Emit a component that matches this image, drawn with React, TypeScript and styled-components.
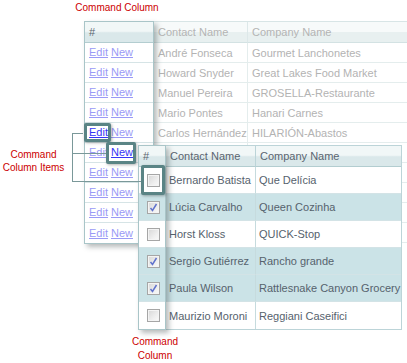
import styled, { createGlobalStyle } from 'styled-components';

const GlobalStyle = createGlobalStyle`
  html, body {
    margin: 0;
    padding: 0;
    background: #fff;
  }
  body {
    font-family: "Liberation Sans", Arial, sans-serif;
  }
`;

const Canvas = styled.div`
  position: relative;
  width: 407px;
  height: 363px;
  overflow: hidden;
  background: #fff;
  font-family: "Liberation Sans", Arial, sans-serif;
  font-size: 11px;
`;

const Note = styled.div<{ $x: number; $y: number; $w: number; $lh: number }>`
  position: absolute;
  left: ${p => p.$x}px;
  top: ${p => p.$y}px;
  width: ${p => p.$w}px;
  text-align: center;
  color: #cc0000;
  font-size: 10px;
  line-height: ${p => p.$lh}px;
  z-index: 5;
`;

/* top grid: faded, only the command column stands out */
const TopGrid = styled.div`
  position: absolute;
  left: 84px;
  top: 21px;
  display: flex;
  align-items: flex-start;
  z-index: 1;
`;

const RaisedColumn = styled.div<{ $width: number }>`
  position: relative;
  z-index: 1;
  width: ${p => p.$width}px;
  box-sizing: border-box;
  border: 1px solid #a9c5c8;
  background: #fff;
  box-shadow: 3px 3px 5px rgba(50, 60, 60, 0.35);
`;

const HeadCell = styled.div<{ $faded?: boolean; $sep?: boolean }>`
  height: 21px;
  box-sizing: border-box;
  display: flex;
  align-items: center;
  padding: 0 4px;
  border-bottom: 1px solid ${p => (p.$faded ? '#d3e2e3' : '#b3cdd0')};
  border-right: ${p => (p.$sep ? `1px solid ${p.$faded ? '#dde8e9' : '#bcd4d8'}` : 'none')};
  background: ${p =>
    p.$faded
      ? 'linear-gradient(#f7fafa 0, #f7fafa 48%, #e8f0f0 52%, #e8f0f0 100%)'
      : 'linear-gradient(#f1f7f7 0, #f1f7f7 46%, #dae8ea 54%, #dae8ea 100%)'};
  color: ${p => (p.$faded ? '#b4b4b4' : '#5a6570')};
  white-space: nowrap;
`;

const CmdRow = styled.div`
  height: 20px;
  box-sizing: border-box;
  border-bottom: 1px solid #d6e4e6;
  display: flex;
  align-items: center;
  gap: 3px;
  padding: 0 4px;

  &:last-child {
    border-bottom: none;
  }
`;

const CmdLink = styled.span<{ $strong?: boolean }>`
  color: ${p => (p.$strong ? '#3434f5' : '#9a9af6')};
  text-decoration: underline;
  line-height: 13px;
`;

/* highlight frame drawn around an item that the notes point at */
const Marked = styled.span<{ $t: number; $r: number; $b: number; $l: number }>`
  position: relative;
  z-index: 4;
  display: inline-flex;

  &::before {
    content: '';
    position: absolute;
    top: -${p => p.$t}px;
    right: -${p => p.$r}px;
    bottom: -${p => p.$b}px;
    left: -${p => p.$l}px;
    border: 3px solid #5a8485;
    border-radius: 2px;
    background: #fff;
    box-shadow: 1px 1px 3px rgba(0, 0, 0, 0.3);
    z-index: -1;
  }
`;

const FadedTable = styled.div`
  display: grid;
  grid-template-columns: 94px 180px;
  border-top: 1px solid #d8e5e6;
`;

const FadedCell = styled.div<{ $sep?: boolean }>`
  height: 20px;
  box-sizing: border-box;
  display: flex;
  align-items: center;
  padding: 0 4px;
  border-bottom: 1px solid #e4eded;
  border-right: ${p => (p.$sep ? '1px solid #e4eded' : 'none')};
  color: #b3b3b3;
  white-space: nowrap;
`;

/* second grid: check box command column */
const SecondGrid = styled.div`
  position: absolute;
  left: 138px;
  top: 145px;
  display: flex;
  align-items: flex-start;
  z-index: 2;
`;

const DataPart = styled.div`
  width: 236px;
  box-sizing: border-box;
  border: 1px solid #bcd4d8;
  border-left: none;
  background: #fff;
  display: grid;
  grid-template-columns: 90px 145px;
`;

const CheckCell = styled.div<{ $selected: boolean }>`
  height: 27px;
  box-sizing: border-box;
  border-bottom: 1px solid #d3e3e6;
  background: ${p => (p.$selected ? '#cbe3e7' : '#fff')};
  display: flex;
  align-items: center;
  justify-content: center;
  padding-left: 3px;

  &:last-child {
    border-bottom: none;
  }
`;

const DataCell = styled.div<{ $selected: boolean; $sep?: boolean; $last?: boolean }>`
  height: 27px;
  box-sizing: border-box;
  border-bottom: ${p => (p.$last ? 'none' : '1px solid #d3e3e6')};
  border-right: ${p => (p.$sep ? '1px solid #c6dbde' : 'none')};
  background: ${p => (p.$selected ? '#cbe3e7' : '#fff')};
  color: #56626d;
  display: flex;
  align-items: center;
  padding: 0 3px;
  white-space: nowrap;
`;

const Box = styled.span`
  position: relative;
  display: inline-block;
  width: 13px;
  height: 13px;
  box-sizing: border-box;
  border: 1px solid #a6a6a6;
  background: linear-gradient(135deg, #d6d6d6 0%, #eeeeee 60%, #fafafa 100%);
  box-shadow: inset 0 0 0 1px #f4f4f4;

  svg {
    position: absolute;
    left: 0;
    top: 0;
  }
`;

const Leader = styled.svg`
  position: absolute;
  left: 0;
  top: 0;
  z-index: 3;
  pointer-events: none;
`;

const topRows = [
  ['André Fonseca', 'Gourmet Lanchonetes'],
  ['Howard Snyder', 'Great Lakes Food Market'],
  ['Manuel Pereira', 'GROSELLA-Restaurante'],
  ['Mario Pontes', 'Hanari Carnes'],
  ['Carlos Hernández', 'HILARIÓN-Abastos'],
  ['', ''],
  ['', ''],
  ['', ''],
  ['', ''],
  ['', ''],
];

const secondRows = [
  { name: 'Bernardo Batista', company: 'Que Delícia', checked: false },
  { name: 'Lúcia Carvalho', company: 'Queen Cozinha', checked: true },
  { name: 'Horst Kloss', company: 'QUICK-Stop', checked: false },
  { name: 'Sergio Gutiérrez', company: 'Rancho grande', checked: true },
  { name: 'Paula Wilson', company: 'Rattlesnake Canyon Grocery', checked: true },
  { name: 'Maurizio Moroni', company: 'Reggiani Caseifici', checked: false },
];

function CheckBox({ checked }: { checked: boolean }) {
  return (
    <Box>
      {checked && (
        <svg width="11" height="11" viewBox="0 0 11 11">
          <path d="M2.5 6 L4.5 8.5 L8.5 2" fill="none" stroke="#6072cc" strokeWidth="1.5" />
        </svg>
      )}
    </Box>
  );
}

export default function App() {
  return (
    <>
      <GlobalStyle />
      <Canvas>
        <Note $x={60} $y={1} $w={114} $lh={14}>Command Column</Note>
        <Note $x={0} $y={148} $w={67} $lh={13}>Command<br />Column Items</Note>
        <Note $x={115} $y={335} $w={80} $lh={14}>Command<br />Column</Note>

        <TopGrid>
          <RaisedColumn $width={70}>
            <HeadCell>#</HeadCell>
            {topRows.map((_, i) => (
              <CmdRow key={i}>
                {i === 4 ? (
                  <Marked $t={3} $r={3} $b={3} $l={5}>
                    <CmdLink $strong>Edit</CmdLink>
                  </Marked>
                ) : (
                  <CmdLink>Edit</CmdLink>
                )}
                {i === 5 ? (
                  <Marked $t={4} $r={3} $b={5} $l={5}>
                    <CmdLink $strong>New</CmdLink>
                  </Marked>
                ) : (
                  <CmdLink>New</CmdLink>
                )}
              </CmdRow>
            ))}
          </RaisedColumn>
          <FadedTable>
            <HeadCell $faded $sep>Contact Name</HeadCell>
            <HeadCell $faded>Company Name</HeadCell>
            {topRows.map(([name, company], i) => [
              <FadedCell key={`n${i}`} $sep>{name}</FadedCell>,
              <FadedCell key={`c${i}`}>{company}</FadedCell>,
            ])}
          </FadedTable>
        </TopGrid>

        <SecondGrid>
          <RaisedColumn $width={28}>
            <HeadCell>#</HeadCell>
            {secondRows.map((r, i) => (
              <CheckCell key={i} $selected={r.checked}>
                {i === 0 ? (
                  <Marked $t={9} $r={5} $b={8} $l={6}>
                    <CheckBox checked={r.checked} />
                  </Marked>
                ) : (
                  <CheckBox checked={r.checked} />
                )}
              </CheckCell>
            ))}
          </RaisedColumn>
          <DataPart>
            <HeadCell $sep>Contact Name</HeadCell>
            <HeadCell>Company Name</HeadCell>
            {secondRows.map((r, i) => {
              const last = i === secondRows.length - 1;
              return [
                <DataCell key={`n${i}`} $selected={r.checked} $sep $last={last}>{r.name}</DataCell>,
                <DataCell key={`c${i}`} $selected={r.checked} $last={last}>{r.company}</DataCell>,
              ];
            })}
          </DataPart>
        </SecondGrid>

        <Leader width="407" height="363">
          <path
            d="M72.5 133 V182 M72 133.5 H83 M72 153.5 H106 M72 181.5 H141"
            fill="none"
            stroke="#7a9899"
            strokeWidth="1"
          />
        </Leader>
      </Canvas>
    </>
  );
}
